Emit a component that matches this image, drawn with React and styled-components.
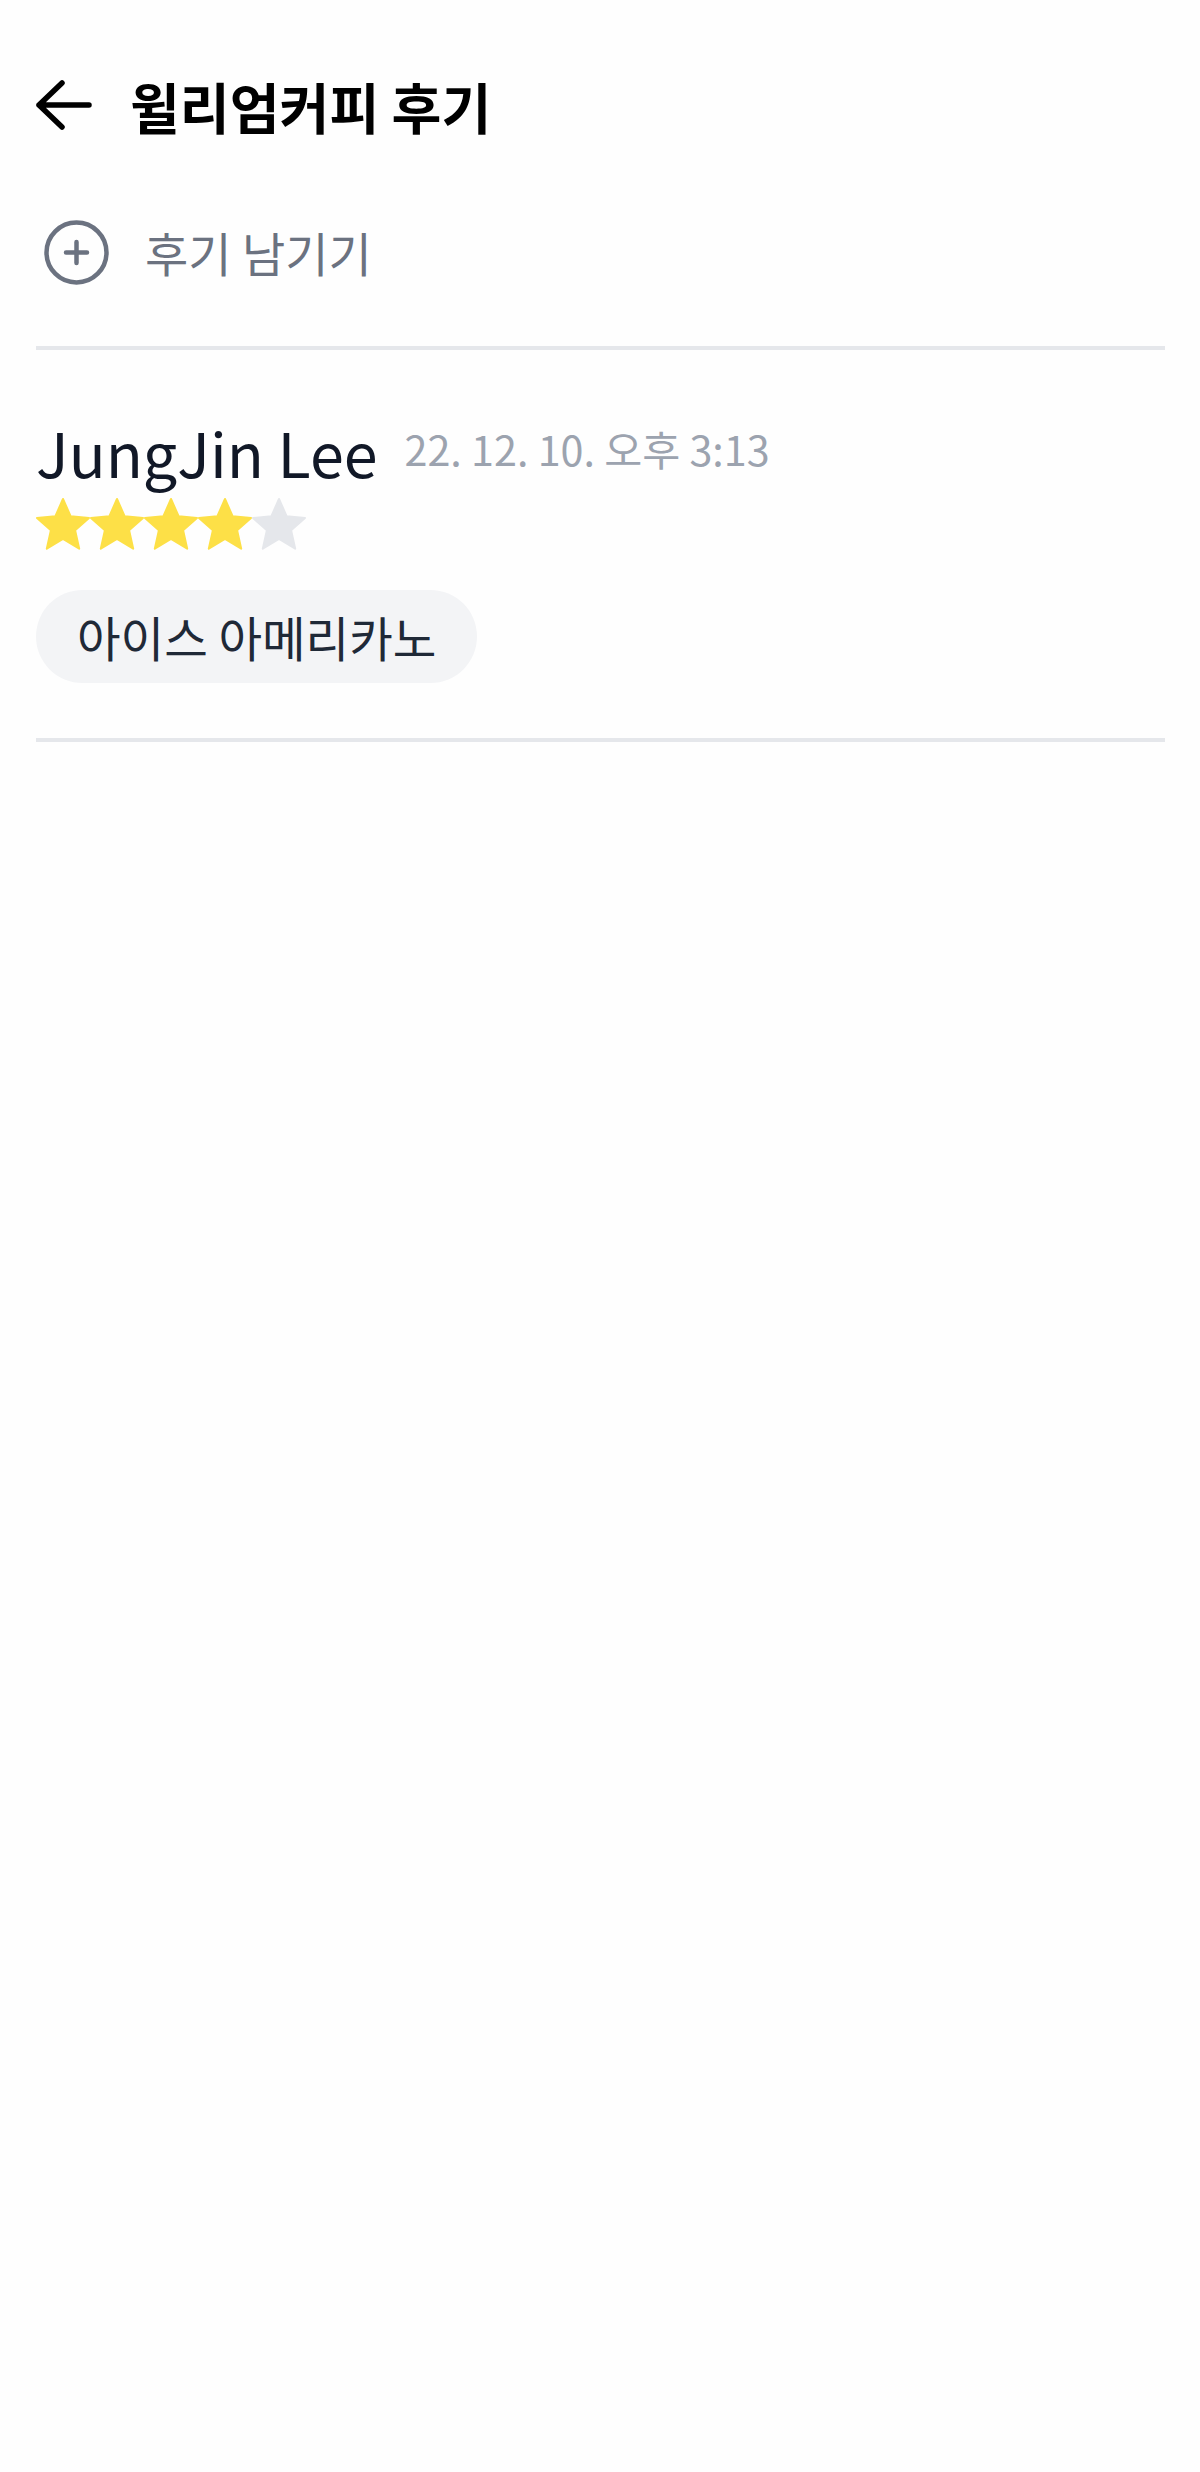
import styled, { createGlobalStyle } from "styled-components";

const GlobalStyle = createGlobalStyle`
	* {
		box-sizing: border-box;
	}

	html,
	body {
		margin: 0;
		background: #fefefe;
		font-family: "Noto Sans CJK KR", "Noto Sans", sans-serif;
	}
`;

const Page = styled.main`
	width: 1200px;
	min-height: 2472px;
	padding: 73px 35px 0 36px;
`;

const Header = styled.header`
	display: flex;
	align-items: center;
	gap: 38px;
	height: 66px;
`;

const BackIcon = styled.svg`
	flex: none;
	width: 56px;
	height: 50px;
	margin-top: -3px;
	color: #000;
`;

const Title = styled.h1`
	margin: 0;
	font-size: 54.2px;
	font-weight: 700;
	line-height: 66px;
	color: #000;
`;

const AddReview = styled.div`
	display: flex;
	align-items: center;
	gap: 36px;
	padding: 79px 0 61px 8px;
	border-bottom: 4px solid #e5e7eb;
`;

const PlusIcon = styled.svg`
	flex: none;
	width: 65px;
	height: 65px;
	margin-top: 2px;
	color: #6b7280;
`;

const AddLabel = styled.span`
	font-size: 47px;
	line-height: 65px;
	color: #6b7280;
`;

const Review = styled.article`
	padding-top: 62px;
	padding-bottom: 55px;
	border-bottom: 4px solid #e5e7eb;
`;

const ReviewHead = styled.div`
	display: flex;
	align-items: flex-start;
	gap: 27px;
`;

const Author = styled.span`
	font-size: 61px;
	line-height: 80px;
	color: #111827;
`;

const DateText = styled.span`
	font-size: 41.3px;
	line-height: 72px;
	color: #9ca3af;
`;

const Stars = styled.div`
	display: flex;
	height: 54px;
	margin-top: 5px;
`;

const Star = styled.svg`
	width: 54px;
	height: 54px;
	color: ${(props) => (props.$on ? "#fde047" : "#e5e7eb")};
`;

const Chip = styled.div`
	display: inline-flex;
	align-items: center;
	height: 93px;
	margin-top: 39px;
	padding: 0 41px;
	border-radius: 47px;
	background: #f3f4f6;
	font-size: 47.4px;
	color: #1f2937;
`;

const ChipRow = styled.div`
	display: flex;
`;

const App = () => {
	return (
		<>
			<GlobalStyle />
			<Page>
				<Header>
					<BackIcon viewBox="0 0 56 50" fill="none" stroke="currentColor" strokeWidth="5.5" strokeLinecap="round" strokeLinejoin="round">
						<path d="M26 3 3 25l23 22M3 25h50" />
					</BackIcon>
					<Title>윌리엄커피 후기</Title>
				</Header>
				<AddReview>
					<PlusIcon viewBox="0 0 65 65" fill="none" stroke="currentColor" strokeWidth="4.5" strokeLinecap="round">
						<circle cx="32.5" cy="32.5" r="30" />
						<path d="M32.500 22v21M22 32.500h21" />
					</PlusIcon>
					<AddLabel>후기 남기기</AddLabel>
				</AddReview>
				<Review>
					<ReviewHead>
						<Author>JungJin Lee</Author>
						<DateText>22. 12. 10. 오후 3:13</DateText>
					</ReviewHead>
					<Stars>
						{[1, 2, 3, 4, 5].map((n) => (
							<Star key={n} $on={n <= 4} viewBox="0 0 54 54" fill="currentColor" stroke="currentColor" strokeWidth="2" strokeLinejoin="round">
								<path d="M27 2l7.600 17.200 18.400 1.800-13.900 12.300 4.100 18.400L27 42l-16.200 9.700 4.100-18.400L1 21l18.400-1.800z" />
							</Star>
						))}
					</Stars>
					<ChipRow>
						<Chip>아이스 아메리카노</Chip>
					</ChipRow>
				</Review>
			</Page>
		</>
	);
};

export default App;
